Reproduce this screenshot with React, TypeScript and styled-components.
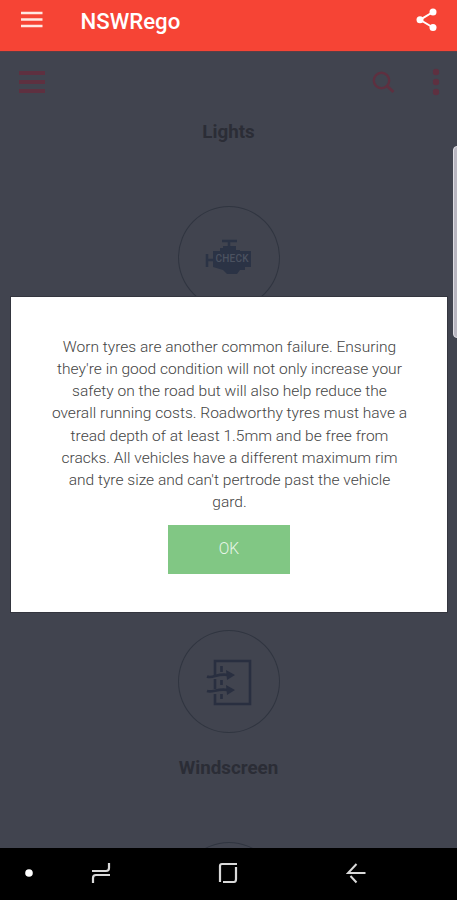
import React from "react";
import styled, { createGlobalStyle } from "styled-components";

const GlobalStyle = createGlobalStyle`
  * { box-sizing: border-box; }
  body { margin: 0; background: #000; font-family: Roboto, sans-serif; }
`;

const Phone = styled.div`
  position: relative;
  display: flex;
  flex-direction: column;
  width: 457px;
  height: 900px;
  overflow: hidden;
`;

const AppBar = styled.header`
  flex: none;
  display: flex;
  align-items: flex-start;
  height: 51px;
  padding: 7px 15px 0 18px;
  background: #f64435;
  color: #fff;
`;

const Title = styled.h1`
  flex: 1;
  margin: 0 0 0 34.5px;
  font-size: 22.2px;
  font-weight: 500;
  line-height: 28px;
`;

const Content = styled.main`
  flex: none;
  height: 797px;
  overflow: hidden;
  background: #41444f;
  box-shadow: inset 0 1px 0 #5a3f47;
`;

const Toolbar = styled.div`
  display: flex;
  align-items: center;
  height: 62px;
  padding: 0 16px 0 18px;
  color: #5e3040;
`;

const Spacer = styled.div`
  flex: 1;
`;

const Label = styled.div`
  height: 24px;
  font-size: 18.8px;
  font-weight: 700;
  line-height: 24px;
  text-align: center;
  color: #2b2d36;
`;

const Category = styled.section<{ $gap: number }>`
  display: flex;
  flex-direction: column;
  align-items: center;
  gap: 23px;
  margin-top: ${(p) => p.$gap}px;
`;

const Ring = styled.div`
  display: flex;
  align-items: center;
  justify-content: center;
  width: 102px;
  height: 103px;
  border: 1px solid #303540;
  border-radius: 50%;
`;

const NavBar = styled.nav`
  flex: none;
  display: flex;
  align-items: center;
  height: 52px;
  padding: 0 91px 2px 24px;
  background: #000;
  color: #d9d9d9;
`;

const NavGap = styled.div<{ $width: number }>`
  width: ${(p) => p.$width}px;
`;

const Dialog = styled.div`
  position: absolute;
  left: 11px;
  top: 297px;
  display: flex;
  flex-direction: column;
  align-items: center;
  width: 436px;
  height: 315px;
  padding-top: 39px;
  background: #fff;
  box-shadow: 0 0 0 1px #34363f;
`;

const Message = styled.p`
  margin: 0 0 0 1px;
  font-size: 15.55px;
  font-weight: 300;
  line-height: 22.15px;
  text-align: center;
  white-space: nowrap;
  color: #444;
`;

const OkButton = styled.button`
  width: 122px;
  height: 49px;
  margin-top: 12px;
  padding: 0;
  border: 0;
  background: #81c784;
  color: #e9f6e9;
  font: 300 15.6px/47px Roboto, sans-serif;
`;

const EdgeHandle = styled.div`
  position: absolute;
  right: -6px;
  top: 146px;
  width: 10px;
  height: 192px;
  border: 1px solid #e0dfe5;
  border-radius: 4px;
  background: #b9b7c1;
`;

const MESSAGE = [
  "Worn tyres are another common failure. Ensuring",
  "they're in good condition will not only increase your",
  "safety on the road but will also help reduce the",
  "overall running costs. Roadworthy tyres must have a",
  "tread depth of at least 1.5mm and be free from",
  "cracks. All vehicles have a different maximum rim",
  "and tyre size and can't pertrode past the vehicle",
  "gard.",
];

function MenuIcon() {
  return (
    <svg width="28" height="26" viewBox="0 0 28 26">
      <path d="M3 6H24.5M3 12.5H24.5M3 19H24.5" stroke="#ffe8e2" strokeWidth="2.3" />
    </svg>
  );
}

function ShareIcon() {
  return (
    <svg width="28" height="28" viewBox="0 0 28 28">
      <path d="M19 5L6 12.8L19 20.5" fill="none" stroke="#fff" strokeWidth="2" />
      <circle cx="19" cy="5" r="3.5" fill="#fff" />
      <circle cx="6" cy="12.8" r="3.5" fill="#fff" />
      <circle cx="19" cy="20.5" r="3.5" fill="#fff" />
    </svg>
  );
}

function BarsIcon() {
  return (
    <svg width="28" height="26" viewBox="0 0 28 26">
      <path d="M1 4H27M1 13H27M1 22H27" stroke="currentColor" strokeWidth="4" />
    </svg>
  );
}

function SearchIcon() {
  return (
    <svg width="24" height="24" viewBox="0 0 24 24" fill="none" stroke="currentColor">
      <circle cx="10.5" cy="10.5" r="7.7" strokeWidth="2.4" />
      <path d="M16 16L22.5 22" strokeWidth="3" />
    </svg>
  );
}

function MoreIcon() {
  return (
    <svg width="10" height="30" viewBox="0 0 10 30" fill="currentColor">
      <circle cx="5" cy="5" r="3.2" />
      <circle cx="5" cy="15" r="3.2" />
      <circle cx="5" cy="25" r="3.2" />
    </svg>
  );
}

function EngineIcon() {
  return (
    <svg width="48" height="40" viewBox="0 0 48 40">
      <path
        d="M8 13H15V10H18V8H31V12H35V13H46V29H40V32H35L32 36H22L18 32L8 29Z"
        fill="#2b3345"
      />
      <path d="M17 3H32M24 3V9M2 16V29M2 22H8" stroke="#2b3345" strokeWidth="2.5" fill="none" />
      <text
        x="27"
        y="24.3"
        textAnchor="middle"
        textLength="33"
        fill="#4b5260"
        fontFamily="Roboto, sans-serif"
        fontSize="10"
        fontWeight="500"
      >
        CHECK
      </text>
    </svg>
  );
}

function WindscreenIcon() {
  return (
    <svg width="48" height="48" viewBox="0 0 48 48" fill="none" stroke="#292f40">
      <path d="M10 17V3H45V46H10V36M10 21V31" strokeWidth="2.6" />
      <path d="M16.5 8V14M16.5 22V27M16.5 36V41" strokeWidth="2.6" />
      <path d="M2 18.5C8 21 12 15 23 17M2 33C8 35 12 30 23 32" strokeWidth="2.6" />
      <path d="M21 12L30 17L22 22ZM21 27L30 32L22 37Z" fill="#292f40" stroke="none" />
    </svg>
  );
}

function DotIcon() {
  return (
    <svg width="10" height="10" viewBox="0 0 10 10">
      <circle cx="5" cy="5" r="3.8" fill="#fff" />
    </svg>
  );
}

function RecentsIcon() {
  return (
    <svg width="20" height="22" viewBox="0 0 20 22" fill="none" stroke="currentColor" strokeWidth="2.2">
      <path d="M1 9H15Q18 9 18 6V1M19 13H5Q2 13 2 16V21" />
    </svg>
  );
}

function HomeIcon() {
  return (
    <svg width="20" height="22" viewBox="0 0 20 22" fill="none" stroke="currentColor" strokeWidth="2.2">
      <path d="M2 20V4Q2 2 4 2H19M18 5V17Q18 20 16 20H5" />
    </svg>
  );
}

function BackIcon() {
  return (
    <svg width="20" height="22" viewBox="0 0 20 22" fill="none" stroke="currentColor" strokeWidth="2">
      <path d="M10.5 2L2 11H19.5M4.5 14L10.5 20.5" />
    </svg>
  );
}

export default function App() {
  return (
    <Phone>
      <GlobalStyle />
      <AppBar>
        <MenuIcon />
        <Title>NSWRego</Title>
        <ShareIcon />
      </AppBar>
      <Content>
        <Toolbar>
          <BarsIcon />
          <Spacer />
          <SearchIcon />
          <NavGap $width={36} />
          <MoreIcon />
        </Toolbar>
        <Category $gap={7}>
          <Label>Lights</Label>
        </Category>
        <Category $gap={62}>
          <Ring>
            <EngineIcon />
          </Ring>
        </Category>
        <Category $gap={321}>
          <Ring>
            <WindscreenIcon />
          </Ring>
          <Label>Windscreen</Label>
        </Category>
        <Category $gap={62}>
          <Ring />
        </Category>
      </Content>
      <NavBar>
        <DotIcon />
        <NavGap $width={57} />
        <RecentsIcon />
        <NavGap $width={107} />
        <HomeIcon />
        <NavGap $width={108} />
        <BackIcon />
      </NavBar>
      <Dialog role="dialog">
        <Message>
          {MESSAGE.map((line) => (
            <React.Fragment key={line}>
              {line}
              <br />
            </React.Fragment>
          ))}
        </Message>
        <OkButton>OK</OkButton>
      </Dialog>
      <EdgeHandle />
    </Phone>
  );
}
